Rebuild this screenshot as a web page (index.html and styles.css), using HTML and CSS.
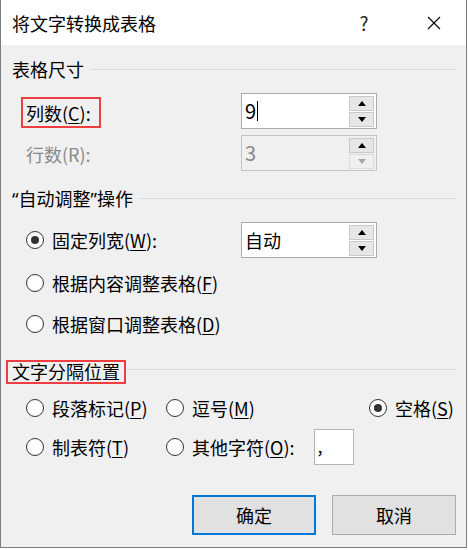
FILE: index.html
```html
<!DOCTYPE html>
<html lang="zh-CN">
<head>
<meta charset="utf-8">
<title>将文字转换成表格</title>
<link rel="stylesheet" href="styles.css">
</head>
<body>
<div class="window">
  <div class="titlebar">
    <span class="title">将文字转换成表格</span>
    <span class="help">?</span>
    <span class="close">
      <svg width="14" height="14" viewBox="0 0 14 14"><path d="M1 1 L13 13 M13 1 L1 13" stroke="#000" stroke-width="1.1" fill="none"/></svg>
    </span>
  </div>
  <div class="content">
    <div class="group-head gh1">
      <span class="group-title">表格尺寸</span><span class="rule"></span>
    </div>
    <div class="field-row fr1">
      <span class="field-label hl">列数(<u>C</u>):</span>
      <div class="spin">
        <span class="spin-value num">9<span class="caret"></span></span>
        <div class="spin-btns">
          <span class="sbtn"><span class="tri up"></span></span>
          <span class="sbtn"><span class="tri down"></span></span>
        </div>
      </div>
    </div>
    <div class="field-row fr2">
      <span class="field-label disabled">行数(R):</span>
      <div class="spin spin-disabled">
        <span class="spin-value num disabled">3</span>
        <div class="spin-btns">
          <span class="sbtn"><span class="tri up"></span></span>
          <span class="sbtn sbtn-off"><span class="tri down off"></span></span>
        </div>
      </div>
    </div>

    <div class="group-head gh2">
      <span class="group-title"><span class="q">“</span>自动调整<span class="q">”</span>操作</span><span class="rule"></span>
    </div>
    <div class="radio-row rr1">
      <span class="radio-item wide"><span class="radio checked"></span><span class="rlabel">固定列宽(<u>W</u>):</span></span>
      <div class="spin">
        <span class="spin-value">自动</span>
        <div class="spin-btns">
          <span class="sbtn"><span class="tri up"></span></span>
          <span class="sbtn"><span class="tri down"></span></span>
        </div>
      </div>
    </div>
    <div class="radio-row rr2">
      <span class="radio-item"><span class="radio"></span><span class="rlabel">根据内容调整表格(<u>F</u>)</span></span>
    </div>
    <div class="radio-row rr3">
      <span class="radio-item"><span class="radio"></span><span class="rlabel">根据窗口调整表格(<u>D</u>)</span></span>
    </div>

    <div class="group-head gh3">
      <span class="group-title hl">文字分隔位置</span><span class="rule"></span>
    </div>
    <div class="sep-row sr1">
      <span class="radio-item"><span class="radio"></span><span class="rlabel">段落标记(<u>P</u>)</span></span>
      <span class="radio-item"><span class="radio"></span><span class="rlabel">逗号(<u>M</u>)</span></span>
      <span class="radio-item"><span class="radio checked"></span><span class="rlabel">空格(<u>S</u>)</span></span>
    </div>
    <div class="sep-row sr2">
      <span class="radio-item"><span class="radio"></span><span class="rlabel">制表符(<u>T</u>)</span></span>
      <span class="radio-item"><span class="radio"></span><span class="rlabel">其他字符(<u>O</u>):</span><span class="char-box">,</span></span>
    </div>

    <div class="buttons">
      <span class="btn btn-default">确定</span>
      <span class="btn">取消</span>
    </div>
  </div>
</div>
</body>
</html>
```

FILE: styles.css
```css
html, body {
  margin: 0;
  padding: 0;
  background: #ffffff;
}
body {
  font-family: "Noto Sans CJK SC", "Noto Sans", sans-serif;
  font-size: 18px;
  color: #000;
}
u {
  text-decoration: underline;
  text-underline-offset: 2px;
  text-decoration-thickness: 1px;
}
.q {
  font-family: "Noto Sans", "DejaVu Sans", sans-serif;
}
.window {
  box-sizing: border-box;
  width: 467px;
  height: 548px;
  border: 1px solid #7c7c7c;
  border-top: none;
  background: #f0f0f0;
  display: flex;
  flex-direction: column;
}
.titlebar {
  height: 45px;
  background: #ffffff;
  display: flex;
  align-items: center;
  padding-left: 11px;
  padding-right: 9px;
}
.title {
  flex: 1;
  line-height: 1;
  font-size: 18px;
}
.help {
  width: 46px;
  text-align: center;
  font-size: 19px;
  line-height: 1;
  color: #222;
  margin-right: 24px;
}
.close {
  width: 46px;
  height: 45px;
  display: flex;
  align-items: center;
  justify-content: center;
}
.close svg { display: block; }

.content {
  display: flex;
  flex-direction: column;
}

/* group headers */
.group-head {
  height: 24px;
  display: flex;
  padding-left: 5px;
  padding-right: 9px;
}
.group-title {
  box-sizing: border-box;
  height: 24px;
  padding: 0 4px;
  border: 2px solid transparent;
  line-height: 19px;
  white-space: nowrap;
}
.group-title.hl { border-color: #ef3e42; }
.rule {
  flex: 1;
  height: 1px;
  background: #dadada;
  margin-top: 11px;
}
.gh1 { margin-top: 13px; }
.gh2 { margin-top: 16px; }
.gh3 { margin-top: 18px; }
.gh3 .rule { margin-top: 9px; }

/* spin fields */
.field-row {
  height: 36px;
  display: flex;
  padding-left: 20px;
}
.fr1 { margin-top: 11px; }
.fr2 { margin-top: 6px; }
.field-label {
  box-sizing: border-box;
  width: 220px;
  flex: none;
  display: flex;
  align-items: center;
}
.field-label.hl {
  width: 80px;
  height: 31px;
  margin-right: 140px;
  margin-top: 4px;
  border: 2px solid #ef3e42;
  padding-left: 3px;
  line-height: 1;
}
.field-label.disabled {
  padding-left: 5px;
  margin-top: 2px;
}
.disabled { color: #8a8a8a; }

.spin {
  box-sizing: border-box;
  width: 136px;
  height: 36px;
  border: 1px solid #acacac;
  background: #ffffff;
  display: flex;
  align-items: flex-start;
}
.spin-disabled { background: #f0f0f0; border-color: #c4c4c4; }
.spin-value {
  flex: 1;
  padding-left: 3px;
  height: 34px;
  display: flex;
  align-items: center;
  line-height: 1;
}
.spin-value.num { font-size: 20px; }
.caret {
  display: inline-block;
  width: 1px;
  height: 20px;
  background: #000;
  margin-left: 1px;
}
.spin-btns {
  display: flex;
  flex-direction: column;
  gap: 1px;
  margin-top: 2px;
  margin-right: 2px;
}
.sbtn {
  box-sizing: border-box;
  width: 25px;
  height: 15px;
  border: 1px solid #c9c9c9;
  background: #e6e6e6;
  display: flex;
  align-items: center;
  justify-content: center;
}
.sbtn-off { background: #f0f0f0; border-color: #dcdcdc; }
.tri {
  width: 0;
  height: 0;
  border-left: 4.5px solid transparent;
  border-right: 4.5px solid transparent;
}
.tri.up { border-bottom: 5px solid #000; }
.tri.down { border-top: 5px solid #000; }
.tri.down.off { border-top-color: #a6a6a6; }

/* radios */
.radio-row {
  height: 36px;
  display: flex;
  align-items: center;
  padding-left: 25px;
}
.rr1 { margin-top: 11px; }
.rr2 { margin-top: 7px; }
.rr3 { margin-top: 5px; }
.radio-item {
  display: flex;
  align-items: center;
  white-space: nowrap;
}
.radio-item.wide { width: 215px; }
.radio {
  box-sizing: border-box;
  width: 18px;
  height: 18px;
  border: 1px solid #333;
  border-radius: 50%;
  background: #fff;
  display: flex;
  align-items: center;
  justify-content: center;
  flex: none;
}
.radio.checked::after {
  content: "";
  width: 8px;
  height: 8px;
  border-radius: 50%;
  background: #333;
}
.rlabel {
  margin-left: 8px;
  line-height: 1;
}

.sep-row {
  height: 36px;
  display: grid;
  grid-template-columns: 140px 203px auto;
  align-items: center;
  padding-left: 25px;
}
.sr1 { margin-top: 6px; }
.sr2 { margin-top: 3px; }
.char-box {
  box-sizing: border-box;
  width: 40px;
  height: 36px;
  margin-left: 19px;
  border: 1px solid #b4b4b4;
  background: #fff;
  padding-left: 3px;
  line-height: 30px;
}

/* buttons */
.buttons {
  display: flex;
  justify-content: flex-end;
  gap: 16px;
  padding-right: 10px;
  margin-top: 30px;
}
.btn {
  box-sizing: border-box;
  width: 124px;
  height: 40px;
  background: #e1e1e1;
  border: 1px solid #adadad;
  display: flex;
  align-items: center;
  justify-content: center;
  line-height: 1;
}
.btn-default {
  border: 2px solid #0078d7;
}
```
